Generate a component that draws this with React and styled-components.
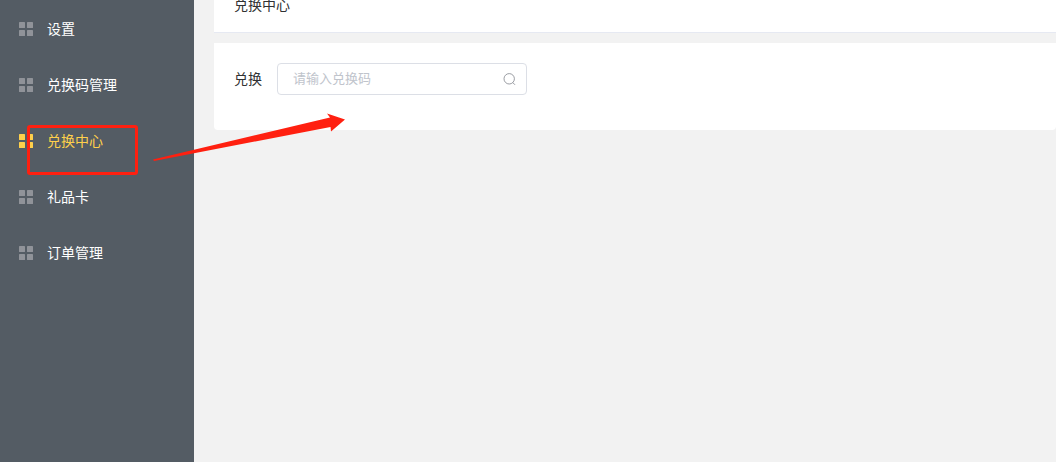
import React, { useState } from 'react';
import styled, { createGlobalStyle } from 'styled-components';

const GlobalStyle = createGlobalStyle`
  * {
    box-sizing: border-box;
  }

  body {
    margin: 0;
    background-color: #f2f2f2;
    color: #303133;
    font-family: "Liberation Sans", "Noto Sans CJK SC", sans-serif;
    font-size: 14px;
    line-height: 20px;
  }
`;

const Container = styled.div`
  position: relative;
  display: flex;
  min-height: 100vh;
  overflow: hidden;
`;

const Sidebar = styled.nav`
  flex: 0 0 194px;
  padding-top: 1px;
  background-color: #545c64;
`;

const Menu = styled.ul`
  margin: 0;
  padding: 0;
  list-style: none;
`;

const MenuLink = styled.a`
  display: flex;
  align-items: center;
  gap: 14px;
  height: 56px;
  padding: 0 19px;
  color: ${(props) => (props.$active ? '#ffd04b' : '#fff')};
  text-decoration: none;

  svg {
    fill: ${(props) => (props.$active ? '#ffd04b' : '#909399')};
  }
`;

const Main = styled.main`
  flex: 1;
  display: flex;
  flex-direction: column;
  gap: 10px;
  padding-left: 20px;
`;

const Header = styled.header`
  display: flex;
  align-items: flex-end;
  height: 33px;
  padding: 0 20px 17px;
  background-color: #fff;
  border-bottom: 1px solid #e6e9f2;
`;

const Title = styled.h1`
  margin: 0;
  font-size: 14px;
  font-weight: 400;
`;

const Card = styled.section`
  padding: 20px 20px 35px;
  background-color: #fff;
  border-radius: 0 0 4px 4px;
`;

const Form = styled.form`
  display: flex;
  align-items: center;
  gap: 15px;
`;

const SearchBox = styled.div`
  display: flex;
  align-items: center;
  width: 250px;
  height: 32px;
  padding: 0 10px 0 15px;
  border: 1px solid #dcdfe6;
  border-radius: 4px;
  background-color: #fff;
`;

const SearchInput = styled.input`
  flex: 1;
  min-width: 0;
  height: 28px;
  padding: 0 0 2px;
  border: none;
  outline: none;
  background: none;
  color: #606266;
  font-family: inherit;
  font-size: 13px;

  &::placeholder {
    color: #c0c4cc;
  }
`;

const SearchButton = styled.button`
  display: flex;
  padding: 0;
  border: none;
  background: none;
  cursor: pointer;
`;

const Markup = styled.svg`
  position: absolute;
  top: 0;
  left: 0;
  pointer-events: none;
`;

const menuItems = ['设置', '兑换码管理', '兑换中心', '礼品卡', '订单管理'];

function GridIcon() {
  return (
    <svg width="14" height="14" viewBox="0 0 14 14" aria-hidden="true">
      <rect width="6" height="6" rx="0.6" />
      <rect x="8" width="6" height="6" rx="0.6" />
      <rect y="8" width="6" height="6" rx="0.6" />
      <rect x="8" y="8" width="6" height="6" rx="0.6" />
    </svg>
  );
}

function SearchIcon() {
  return (
    <svg width="14" height="14" viewBox="0 0 14 14" fill="none" stroke="#9a9da3" aria-hidden="true">
      <circle cx="7.2" cy="6.8" r="5.2" />
      <path d="M10.6 10.4L13 12.8" />
    </svg>
  );
}

function App() {
  const [active, setActive] = useState('兑换中心');
  const [code, setCode] = useState('');

  return (
    <Container>
      <GlobalStyle />
      <Sidebar>
        <Menu>
          {menuItems.map((item) => (
            <li key={item}>
              <MenuLink href="#" $active={item === active} onClick={() => setActive(item)}>
                <GridIcon />
                {item}
              </MenuLink>
            </li>
          ))}
        </Menu>
      </Sidebar>

      <Main>
        <Header>
          <Title>兑换中心</Title>
        </Header>
        <Card>
          <Form onSubmit={(e) => e.preventDefault()}>
            <label htmlFor="code">兑换</label>
            <SearchBox>
              <SearchInput
                id="code"
                type="text"
                placeholder="请输入兑换码"
                value={code}
                onChange={(e) => setCode(e.target.value)}
              />
              <SearchButton type="submit" aria-label="搜索">
                <SearchIcon />
              </SearchButton>
            </SearchBox>
          </Form>
        </Card>
      </Main>

      {/* Red box round the current menu item and the arrow to the input */}
      <Markup width="360" height="190" viewBox="0 0 360 190" aria-hidden="true">
        <rect x="28.5" y="126.5" width="108" height="47" rx="1.5" fill="none" stroke="#ff2010" strokeWidth="3" />
        <path d="M153 159.5L330 117.5L327 113.5L345 119.5L331 131.5L330.5 127L154 161Z" fill="#ff2010" />
      </Markup>
    </Container>
  );
}

export default App;
